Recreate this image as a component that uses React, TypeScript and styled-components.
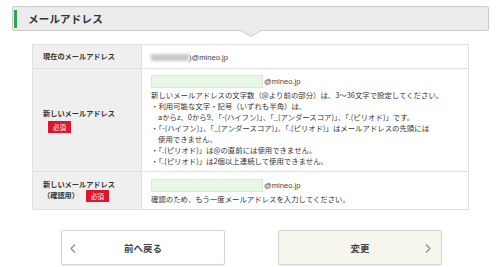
import React from 'react';
import styled, { createGlobalStyle } from 'styled-components';

const GlobalStyle = createGlobalStyle`
  html, body {
    margin: 0;
    padding: 0;
    background: #fff;
  }
  body {
    width: 500px;
    height: 267px;
    overflow: hidden;
    font-family: 'Noto Sans CJK JP', 'Noto Sans', sans-serif;
    color: #333;
  }
`;

const Page = styled.div`
  padding: 6px 11px 0 12px;
`;

const SectionHeader = styled.div`
  position: relative;
  height: 23px;
  display: flex;
  align-items: center;
  background: #ececec;
  border: 1px solid #cbcbcb;
  border-radius: 2px;

  /* little notch under the header */
  &::before,
  &::after {
    content: '';
    position: absolute;
    left: 50%;
    width: 0;
    height: 0;
    border-left: 12px solid transparent;
    border-right: 12px solid transparent;
    transform: translateX(-50%);
  }
  &::before {
    top: 23px;
    border-top: 7px solid #cbcbcb;
  }
  &::after {
    top: 22px;
    border-top: 7px solid #ececec;
  }
`;

const GreenMark = styled.span`
  width: 3px;
  height: 18px;
  margin-left: 1px;
  background: #2fa84f;
`;

const Title = styled.h2`
  margin: 0 0 0 11px;
  font-size: 10.5px;
  font-weight: 700;
  color: #333;
  letter-spacing: 0.2px;
`;

const FormTable = styled.table`
  margin: 13px 0 0 20px;
  width: 437px;
  border-collapse: collapse;
  font-size: 7.4px;
`;

const Row = styled.tr<{ $h: number }>`
  height: ${(p) => p.$h}px;
`;

const Label = styled.th`
  width: 88px;
  padding: 0 10px;
  background: #efefef;
  border: 1px solid #e0e0e0;
  text-align: left;
  vertical-align: middle;
  font-weight: 700;
  font-size: 7.2px;
  line-height: 11px;
  color: #333;
`;

const Value = styled.td`
  padding: 5px 10px 4px 9px;
  background: #fff;
  border: 1px solid #e0e0e0;
  vertical-align: middle;
  line-height: 11px;
`;

const Required = styled.span<{ $inline?: boolean }>`
  display: inline-block;
  margin: ${(p) => (p.$inline ? '0 0 0 7px' : '2px 0 0 5px')};
  padding: 0 5px;
  height: 12px;
  line-height: 12px;
  background: #d8192b;
  color: #fff;
  font-size: 6.5px;
  font-weight: 400;
  vertical-align: middle;
`;

const Blurred = styled.span`
  display: inline-block;
  width: 38px;
  height: 7px;
  background: #c9c9c9;
  filter: blur(1.5px);
  vertical-align: middle;
`;

const Domain = styled.span`
  font-family: 'Liberation Sans', Arial, sans-serif;
  font-size: 7.6px;
  color: #444;
`;

const InputLine = styled.div`
  display: flex;
  align-items: center;
  margin-bottom: 1px;
`;

const MailInput = styled.input`
  width: 112px;
  height: 13px;
  box-sizing: border-box;
  margin: 0 1px 0 0;
  padding: 0 3px;
  background: #e8f8e7;
  border: 1px solid #d6e9d5;
  border-radius: 0;
  outline: none;
`;

const Note = styled.p`
  margin: 0;
`;

const Rules = styled.ul`
  margin: 0;
  padding: 0;
  list-style: none;
`;

const Rule = styled.li`
  padding-left: 7px;
  text-indent: -7px;
`;

const Buttons = styled.div`
  display: flex;
  justify-content: center;
  gap: 53px;
  margin-top: 20px;
  padding-left: 2px;
`;

const NavButton = styled.button<{ $primary?: boolean }>`
  position: relative;
  width: 164px;
  height: 35px;
  display: flex;
  align-items: center;
  justify-content: center;
  background: ${(p) => (p.$primary ? '#f7f6ec' : '#fff')};
  border: 1px solid #d3d3d3;
  border-radius: 2px;
  box-shadow: 0 1px 1px rgba(0, 0, 0, 0.08);
  font-family: 'Noto Sans CJK JP', sans-serif;
  font-size: 9.5px;
  font-weight: 700;
  color: #444;
  padding: 0;
`;

const Chevron = styled.svg<{ $side: 'left' | 'right' }>`
  position: absolute;
  top: 13px;
  ${(p) => (p.$side === 'left' ? 'left: 8px;' : 'right: 10px;')}
`;

const ChevronIcon = ({ side }: { side: 'left' | 'right' }) => (
  <Chevron $side={side} width="6" height="9" viewBox="0 0 6 9">
    <polyline
      points={side === 'left' ? '5,0.5 1,4.5 5,8.5' : '1,0.5 5,4.5 1,8.5'}
      fill="none"
      stroke="#8a8a8a"
      strokeWidth="1.2"
    />
  </Chevron>
);

export default function App() {
  return (
    <Page>
      <GlobalStyle />
      <SectionHeader>
        <GreenMark />
        <Title>メールアドレス</Title>
      </SectionHeader>

      <FormTable>
        <tbody>
          <Row $h={24}>
            <Label>現在のメールアドレス</Label>
            <Value>
              <Blurred />
              <Domain>)@mineo.jp</Domain>
            </Value>
          </Row>
          <Row $h={103}>
            <Label>
              新しいメールアドレス
              <br />
              <Required>必須</Required>
            </Label>
            <Value>
              <InputLine>
                <MailInput type="text" />
                <Domain>@mineo.jp</Domain>
              </InputLine>
              <Note>
                新しいメールアドレスの文字数（@より前の部分）は、3〜36文字で設定してください。
              </Note>
              <Rules>
                <Rule>
                  ・利用可能な文字・記号（いずれも半角）は、
                  <br />
                  aからz、0から9、「-(ハイフン)」、「_(アンダースコア)」、「.(ピリオド)」です。
                </Rule>
                <Rule>
                  ・「-(ハイフン)」、「_(アンダースコア)」、「.(ピリオド)」はメールアドレスの先頭には
                  <br />
                  使用できません。
                </Rule>
                <Rule>・「.(ピリオド)」は@の直前には使用できません。</Rule>
                <Rule>・「.(ピリオド)」は2個以上連続して使用できません。</Rule>
              </Rules>
            </Value>
          </Row>
          <Row $h={38}>
            <Label>
              新しいメールアドレス
              <br />
              （確認用）
              <Required $inline>必須</Required>
            </Label>
            <Value>
              <InputLine>
                <MailInput type="text" />
                <Domain>@mineo.jp</Domain>
              </InputLine>
              <Note>確認のため、もう一度メールアドレスを入力してください。</Note>
            </Value>
          </Row>
        </tbody>
      </FormTable>

      <Buttons>
        <NavButton type="button">
          <ChevronIcon side="left" />
          前へ戻る
        </NavButton>
        <NavButton type="button" $primary>
          変更
          <ChevronIcon side="right" />
        </NavButton>
      </Buttons>
    </Page>
  );
}
